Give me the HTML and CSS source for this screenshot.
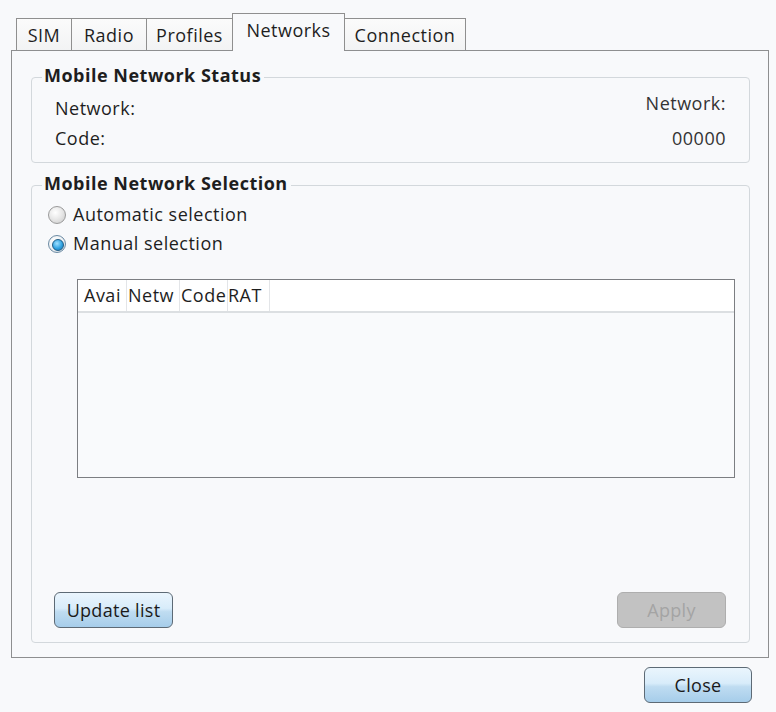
FILE: index.html
```html
<!DOCTYPE html>
<html lang="en">
<head>
<meta charset="utf-8">
<title>Networks</title>
<link rel="stylesheet" href="styles.css">
</head>
<body>
<div class="window">
  <div class="tabs">
    <div class="tab tab-sim">SIM</div>
    <div class="tab tab-radio">Radio</div>
    <div class="tab tab-profiles">Profiles</div>
    <div class="tab tab-networks active">Networks</div>
    <div class="tab tab-connection">Connection</div>
  </div>
  <div class="panel">
    <fieldset class="group status">
      <legend>Mobile Network Status</legend>
      <div class="status-grid">
        <div class="status-labels">
          <div class="row">Network:</div>
          <div class="row">Code:</div>
        </div>
        <div class="status-values">
          <div class="row">Network:</div>
          <div class="row">00000</div>
        </div>
      </div>
    </fieldset>
    <fieldset class="group selection">
      <legend>Mobile Network Selection</legend>
      <div class="selection-body">
        <label class="radio"><span class="dot"></span>Automatic selection</label>
        <label class="radio"><span class="dot checked"></span>Manual selection</label>
        <div class="list">
          <div class="list-head">
            <div class="col col-avai">Avai</div>
            <div class="col col-netw">Netw</div>
            <div class="col col-code">Code</div>
            <div class="col col-rat">RAT</div>
            <div class="col col-fill"></div>
          </div>
          <div class="list-body"></div>
        </div>
        <div class="actions">
          <button class="btn btn-update">Update list</button>
          <button class="btn btn-apply" disabled>Apply</button>
        </div>
      </div>
    </fieldset>
  </div>
  <div class="footer">
    <button class="btn btn-close">Close</button>
  </div>
</div>
</body>
</html>
```
FILE: styles.css
```css
* { box-sizing: border-box; }
html, body {
  margin: 0;
  padding: 0;
  background: #f8f9fb;
}
body {
  font-family: "Open Sans", "Noto Sans", sans-serif;
  font-size: 18px;
  letter-spacing: 0.5px;
  color: #1e1e1e;
  width: 776px;
  height: 712px;
  overflow: hidden;
}
.window {
  padding: 13px 7px 0 11px;
}
.tabs {
  display: flex;
  align-items: flex-end;
  margin-left: 5px;
  height: 37px;
  position: relative;
  z-index: 1;
}
.tab {
  height: 32px;
  border: 1px solid #8f8f8f;
  border-bottom: none;
  margin-right: -1px;
  background: linear-gradient(#fbfbfb, #f2f3f4);
  display: flex;
  align-items: center;
  justify-content: center;
  line-height: 1;
}
.tab-sim { width: 56px; }
.tab-radio { width: 76px; }
.tab-profiles { width: 87px; }
.tab-networks { width: 113px; }
.tab-connection { width: 122px; }
.tab.active {
  height: 38px;
  margin-bottom: -1px;
  background: #f8f9fb;
  padding-bottom: 6px;
}
.panel {
  height: 608px;
  border: 1px solid #8e8f90;
  background: #f8f9fb;
  padding: 13px 18px 14px 19px;
  display: flex;
  flex-direction: column;
}
.group {
  margin: 0;
  padding: 0;
  border: 1px solid #d3d8dc;
  border-radius: 4px;
  min-width: 0;
}
.group legend {
  font-weight: 700;
  margin-left: 10px;
  padding: 0 3px 4px 2px;
  line-height: 23px;
}
.status {
  height: 99px;
  flex: none;
}
.status-grid {
  display: flex;
  justify-content: space-between;
  padding: 0 23px;
}
.status-values { text-align: right; }
.status-labels .row:first-child { margin-top: 2px; }
.status-values .row:first-child { margin-top: -3px; }
.status-values .row + .row { margin-top: 5px; }
.row {
  line-height: 30px;
  height: 30px;
}
.status-values .row { color: #333; }
.selection {
  margin-top: 9px;
  flex: 1;
  display: flex;
  flex-direction: column;
}
.selection-body {
  flex: 1;
  display: flex;
  flex-direction: column;
  padding: 1px 14px 14px 16px;
}
.radio {
  display: flex;
  align-items: center;
  height: 29px;
  line-height: 29px;
  gap: 7px;
}
.dot {
  width: 18px;
  height: 18px;
  border-radius: 50%;
  border: 1px solid #9a9a9a;
  background: radial-gradient(circle at 40% 35%, #ffffff 0%, #e9e9e9 45%, #c8c8c8 100%);
  flex: none;
  position: relative;
}
.dot.checked {
  border-color: #6b8aa3;
  background: radial-gradient(circle at 40% 35%, #ffffff 0%, #eef2f5 50%, #cfd6dc 100%);
}
.dot.checked::after {
  content: "";
  position: absolute;
  left: 3px;
  top: 3px;
  width: 10px;
  height: 10px;
  border-radius: 50%;
  border: 1px solid #1f5d87;
  background: radial-gradient(circle at 40% 35%, #9fe0ff 0%, #31a3e2 55%, #146ea8 100%);
}
.list {
  margin: 21px 0 0 29px;
  height: 199px;
  border: 1px solid #7c7e82;
  background: #f9fafc;
  display: flex;
  flex-direction: column;
}
.list-head {
  display: flex;
  height: 33px;
  background: #ffffff;
  border-bottom: 2px solid #dcdfe2;
  padding: 0 5px;
}
.col {
  height: 31px;
  line-height: 30px;
  white-space: nowrap;
  overflow: hidden;
  border-right: 1px solid #e3e5e8;
  padding-left: 1px;
  letter-spacing: 0.5px;
}
.col-avai { width: 44px; }
.col-netw { width: 53px; }
.col-code { width: 48px; }
.col-rat { width: 42px; padding-left: 0; }
.col-fill { flex: 1; border-right: none; }
.actions {
  margin-top: auto;
  display: flex;
  justify-content: space-between;
  padding: 0 9px 0 6px;
}
.btn {
  font-family: "Open Sans", "Noto Sans", sans-serif;
  font-size: 18px;
  letter-spacing: 0.3px;
  height: 36px;
  border-radius: 6px;
  border: 1px solid #5d6a75;
  background: linear-gradient(#eaf5fd 0%, #d8ecfa 45%, #bfdcf1 55%, #a6cdea 100%);
  color: #1a1a1a;
  padding: 0;
}
.btn-update { width: 119px; }
.btn-apply {
  width: 109px;
  background: #c2c2c2;
  border-color: #aeaeae;
  color: #a4a4a4;
}
.footer {
  display: flex;
  justify-content: flex-end;
  padding: 9px 17px 0 0;
}
.btn-close { width: 108px; }
```
